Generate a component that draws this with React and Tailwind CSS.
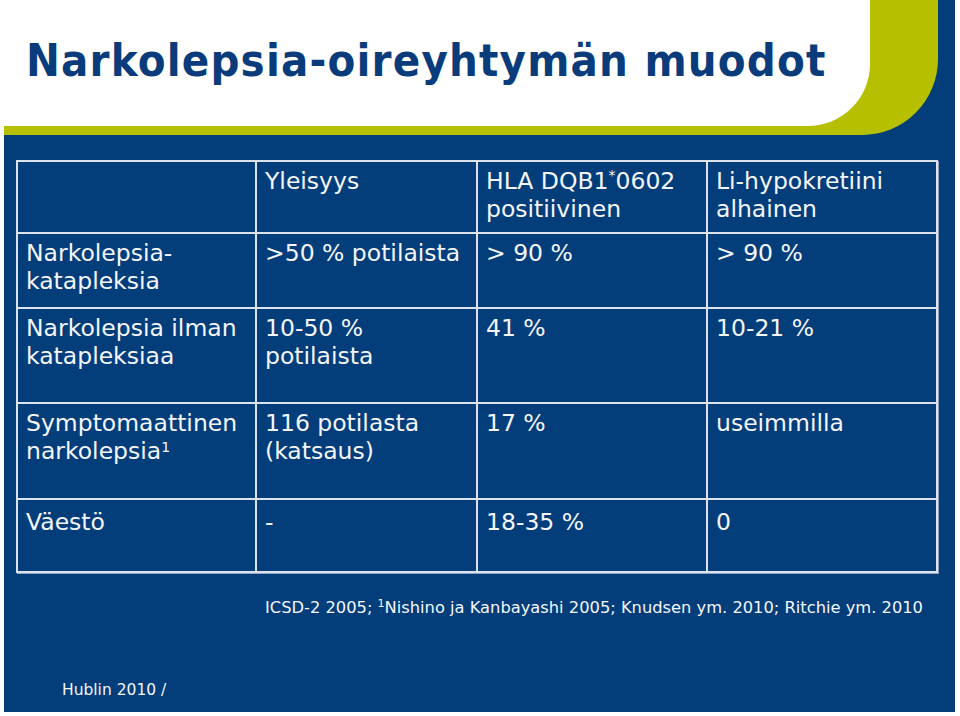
import React from "react";

const cell = "bg-[#033d7a] pl-[8px] pt-[5px] text-[23.5px] leading-[28px] text-[#f4f6fa]";

export default function App() {
  return (
    <div className="w-[960px] h-[716px] bg-white overflow-hidden">
      <div className="ml-[4px] w-[951px] h-[712px] bg-[#033d7a] flex flex-col font-['DejaVu_Sans',sans-serif]">
        {/* header */}
        <div className="h-[135px] bg-[#033d7a] flex">
          <div className="w-[934px] h-[135px] bg-[#b6bf00] rounded-br-[76px]">
            <div className="w-[866px] h-[126px] bg-white rounded-br-[62px] pl-[22px] pt-[38px]">
              <h1 className="font-['DejaVu_Sans_Condensed','DejaVu_Sans',sans-serif] font-stretch-condensed font-bold text-[45px] leading-[46px] tracking-[1.2px] text-[#0a3c7c] whitespace-nowrap">
                Narkolepsia-oireyhtymän muodot
              </h1>
            </div>
          </div>
        </div>

        {/* table */}
        <div className="pl-[12px] pt-[25px]">
          <div className="grid grid-cols-[237px_219px_228px_228px] grid-rows-[70px_73px_93px_94px_71px] gap-[2px] p-[2px] bg-[#dde3ec] w-[922px] shadow-[1px_1px_0_#8fa3c0]">
            <div className={cell}></div>
            <div className={cell}>Yleisyys</div>
            <div className={cell}>
              HLA DQB1<sup className="text-[14px] -top-[9px]">*</sup>0602
              <br />positiivinen
            </div>
            <div className={cell}>Li-hypokretiini<br />alhainen</div>

            <div className={cell}>Narkolepsia-<br />katapleksia</div>
            <div className={cell}>&gt;50 % potilaista</div>
            <div className={cell}>&gt; 90 %</div>
            <div className={cell}>&gt; 90 %</div>

            <div className={cell}>Narkolepsia ilman<br />katapleksiaa</div>
            <div className={cell}>10-50 %<br />potilaista</div>
            <div className={cell}>41 %</div>
            <div className={cell}>10-21 %</div>

            <div className={cell}>
              Symptomaattinen<br />narkolepsia<sup className="text-[14px] -top-[7px]">1</sup>
            </div>
            <div className={cell}>116 potilasta<br />(katsaus)</div>
            <div className={cell}>17 %</div>
            <div className={cell}>useimmilla</div>

            <div className={cell + " pt-[8px]"}>Väestö</div>
            <div className={cell + " pt-[8px]"}>-</div>
            <div className={cell + " pt-[8px]"}>18-35 %</div>
            <div className={cell + " pt-[8px]"}>0</div>
          </div>
        </div>

        <div className="pl-[261px] pt-[25px] text-[16.3px] leading-[20px] text-[#f4f6fa] whitespace-nowrap">
          ICSD-2 2005; <sup className="text-[11px] -top-[6px]">1</sup>Nishino ja Kanbayashi 2005; Knudsen ym. 2010; Ritchie ym. 2010
        </div>

        <div className="pl-[58px] pt-[62px] text-[15.5px] leading-[20px] text-[#f4f6fa] whitespace-nowrap">
          Hublin 2010 /
        </div>
      </div>
    </div>
  );
}
